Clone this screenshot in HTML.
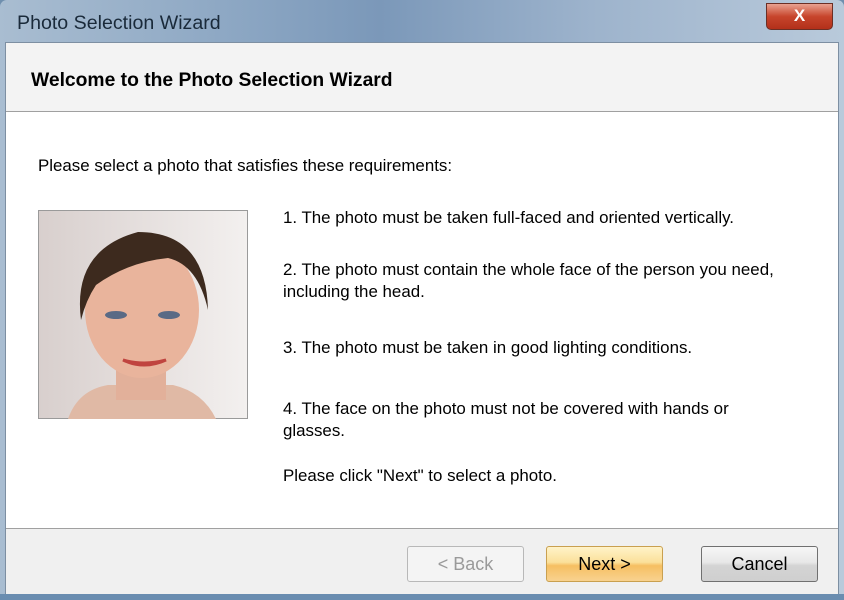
<!DOCTYPE html>
<html><head><style>
body{margin:0;width:844px;height:600px;overflow:hidden;font-family:"Liberation Sans",sans-serif;background:#6f8fae}
.win{position:absolute;left:0;top:0;width:844px;height:600px;border-radius:7px 7px 0 0;background:linear-gradient(90deg,#a9bdd1 0%,#8aa5c2 30%,#7b98b9 45%,#9db3cc 70%,#b9cadb 100%)}
.title{position:absolute;left:17px;top:12px;font-size:19.6px;color:#1a2a3a}
.close{position:absolute;left:766px;top:3px;width:67px;height:27px;border-radius:0 0 5px 5px;background:linear-gradient(#e9a291,#c7452c 50%,#b3301a);border:1px solid #6b2f25;color:#fff;font-weight:bold;font-size:17px;text-align:center;line-height:24px;box-sizing:border-box}
.client{position:absolute;left:5px;top:42px;width:834px;height:553px;background:#fff;border:1px solid #7d8fa2;box-sizing:border-box}
.hdr{position:absolute;left:0;top:0;width:100%;height:68px;background:#f3f3f3;border-bottom:1px solid #a0a0a0}
.hdr b{position:absolute;left:25px;top:27px;font-size:19.3px;color:#000}
.ftr{position:absolute;left:0;top:485px;width:100%;height:68px;background:#f0f0f0;border-top:1px solid #a0a0a0}
.t{position:absolute;font-size:16.9px;color:#000;line-height:22px}
.btn{position:absolute;top:17px;width:117px;height:36px;border-radius:3px;box-sizing:border-box;text-align:center;line-height:34px;font-size:18px}
.bottom{position:absolute;left:0;top:594px;width:844px;height:6px;background:#6a8db0}
</style></head><body>
<div class="win">
<div class="title">Photo Selection Wizard</div>
<div class="close">X</div>
<div class="client">
<div class="hdr"><b>Welcome to the Photo Selection Wizard</b></div>
<div class="t" style="left:32px;top:112px">Please select a photo that satisfies these requirements:</div>
<svg style="position:absolute;left:32px;top:167px" width="210" height="210" viewBox="0 0 210 210">
<defs><linearGradient id="bg" x1="0" x2="1"><stop offset="0" stop-color="#d8cfcd"/><stop offset="1" stop-color="#f3f0ef"/></linearGradient></defs>
<rect x="0.5" y="0.5" width="209" height="208" fill="url(#bg)" stroke="#9a9a9a"/>
<path d="M30 209 Q40 180 70 175 L135 175 Q165 182 178 209Z" fill="#e0b9a5"/>
<rect x="78" y="150" width="50" height="40" fill="#e2b09a"/>
<ellipse cx="104" cy="100" rx="57" ry="68" fill="#e9b49c"/>
<path d="M43 110 Q34 40 100 22 Q168 22 170 100 Q160 55 130 48 Q90 52 58 75 Q48 90 43 110Z" fill="#3d2a1e"/>
<ellipse cx="78" cy="105" rx="11" ry="4" fill="#5a6a85"/>
<ellipse cx="131" cy="105" rx="11" ry="4" fill="#5a6a85"/>
<path d="M85 150 Q106 160 128 150 Q106 156 85 150Z" fill="#c0443f" stroke="#c0443f" stroke-width="3"/>
</svg>
<div class="t" style="left:277px;top:164px">1. The photo must be taken full-faced and oriented vertically.</div>
<div class="t" style="left:277px;top:216px">2. The photo must contain the whole face of the person you need,<br>including the head.</div>
<div class="t" style="left:277px;top:294px">3. The photo must be taken in good lighting conditions.</div>
<div class="t" style="left:277px;top:355px">4. The face on the photo must not be covered with hands or<br>glasses.</div>
<div class="t" style="left:277px;top:422px">Please click "Next" to select a photo.</div>
<div class="ftr">
<div class="btn" style="left:401px;border:1px solid #b8b8b8;background:#f4f4f4;color:#9a9a9a">&lt; Back</div>
<div class="btn" style="left:540px;border:1px solid #c9a050;background:linear-gradient(#fff3c8,#fbe09a 45%,#f6bf62 55%,#f8d290);color:#000">Next &gt;</div>
<div class="btn" style="left:695px;border:1px solid #707070;background:linear-gradient(#f6f6f6,#e8e8e8 45%,#d4d4d4 55%,#cfcfcf);color:#000">Cancel</div>
</div>
</div>
<div class="bottom"></div>
</div>
</body></html>
